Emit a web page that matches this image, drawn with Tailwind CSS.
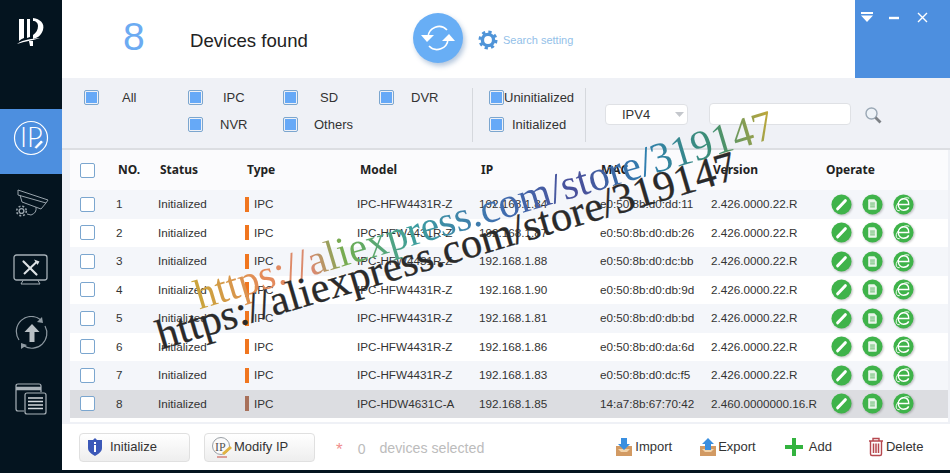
<!DOCTYPE html>
<html lang="en">
  <head>
    <meta charset="UTF-8" />
    <title>ConfigTool</title>
    <script src="https://cdn.jsdelivr.net/npm/@tailwindcss/browser@4"></script>
  </head>

  <body class="bg-[#04141f] font-['Liberation_Sans',Arial,sans-serif] overflow-hidden">
    <!-- shared icons -->
    <svg class="hidden">
      <symbol id="pen" viewBox="0 0 22 22">
        <circle cx="11" cy="11" r="10.5" fill="#3fb34a" />
        <path d="M7 15.5 L15 7" stroke="#fff" stroke-width="3.2" stroke-linecap="round" />
      </symbol>
      <symbol id="doc" viewBox="0 0 22 22">
        <circle cx="11" cy="11" r="10.5" fill="#3fb34a" />
        <path d="M6.5 6.5 Q6.5 5.5 7.5 5.5 H13 L15.5 8 V15.5 Q15.5 16.5 14.5 16.5 H7.5 Q6.5 16.5 6.5 15.5 Z" fill="#e9f5ea" />
        <path d="M8.5 9.5 H13.5 M8.5 11.5 H13.5 M8.5 13.5 H13.5" stroke="#5fb868" stroke-width="1" />
      </symbol>
      <symbol id="ie" viewBox="0 0 22 22">
        <circle cx="11" cy="11" r="10.5" fill="#3fb34a" />
        <path d="M5.5 11 H16.5 C16.5 6.5 13.5 5 11 5 C7.5 5 5.5 8 5.5 11 C5.5 15 8.5 17 11 17 C13.5 17 15.5 16 16.5 14" fill="none" stroke="#fff" stroke-width="1.4" />
        <path d="M17 4.5 C13 2.5 6 6 3.5 13 C2.8 15.5 4 18 7 17.5" fill="none" stroke="#fff" stroke-width="1" />
      </symbol>
    </svg>

    <div class="relative flex h-[470px] w-[950px] overflow-hidden">
      <!-- Sidebar -->
      <aside class="w-[62px] shrink-0 bg-[#04141f] flex flex-col">
        <div class="h-[109px] flex justify-center pt-[17px]">
          <svg width="30" height="30" viewBox="0 0 30 30">
            <path d="M3 2 H8 V21 Q5 22 3 24 Z" fill="#fff" />
            <path d="M11 2 H14 V20 L11 21 Z" fill="#fff" />
            <path d="M17 1 C24 2 29 6 27 13 C25 19 21 21 17 22 V18 C20 16 22 13 22 9 C22 6 20 4 17 4 Z" fill="#fff" />
            <path d="M1 27 C8 22 16 22 24 21 C16 24 9 24 1 27 Z" fill="#fff" />
            <path d="M13 24 H17 V29 H14 Z" fill="#fff" />
          </svg>
        </div>
        <div class="h-[65px] bg-[#4d8fdf] flex items-center justify-center pb-[7px] pr-[1px]">
          <svg width="36" height="36" viewBox="0 0 36 36">
            <circle cx="18" cy="18" r="16.5" fill="none" stroke="#fff" stroke-width="1.2" />
            <text x="7" y="27" font-size="27" font-family="Lato, sans-serif" font-weight="300" fill="#fff">IP</text>
            <path d="M21 27.5 L28 20 L30.5 22 L23.5 29 Z" fill="#fff" stroke="#4d8fdf" stroke-width="0.8" />
          </svg>
        </div>
        <div class="h-[66px] flex items-center justify-center pb-[6px] pl-[1px]">
          <svg width="34" height="31" viewBox="0 0 34 31" fill="none" stroke="#97a2aa" stroke-width="1">
            <path d="M3 1 L33 11 L31 14 L3 6 Z" />
            <path d="M5 6 L7 13 L26 20 L31 14" />
            <path d="M21 18 Q22 24 16 26 L12 25" />
            <circle cx="6.5" cy="22" r="2.4" stroke-width="1.4" />
            <circle cx="6.5" cy="22" r="4.8" stroke-width="1.6" stroke-dasharray="2 1.8" />
          </svg>
        </div>
        <div class="h-[60px] flex items-center justify-center">
          <svg width="36" height="32" viewBox="0 0 36 32" fill="none" stroke="#a5afb6">
            <rect x="1" y="1" width="33" height="25" rx="2.5" stroke-width="1.3" />
            <path d="M10 26.5 L8 30 H27 L25 26.5" stroke-width="1" />
            <path d="M10.5 7.5 L23.5 20.5" stroke="#dde1e4" stroke-width="2.2" stroke-linecap="round" />
            <path d="M23.5 8 L11 20" stroke="#dde1e4" stroke-width="2" />
            <path d="M21 5.5 L26.5 7.5 L24.5 11 Z" fill="#dde1e4" stroke="none" />
          </svg>
        </div>
        <div class="h-[66px] flex items-center justify-center pl-[1px]">
          <svg width="34" height="34" viewBox="0 0 34 34" fill="none">
            <path d="M4 24 A15 15 0 0 1 26 4" stroke="#8f9aa2" stroke-width="1.2" />
            <path d="M30 10 A15 15 0 0 1 9 30" stroke="#8f9aa2" stroke-width="1.2" />
            <path d="M27 1 L28 7 L22 6 Z" fill="#8f9aa2" />
            <path d="M6 33 L6 27 L12 29 Z" fill="#8f9aa2" />
            <path d="M17 8 L24.5 16 H19.5 V26 H14.5 V16 H9.5 Z" fill="#b9c0c5" />
          </svg>
        </div>
        <div class="h-[65px] flex items-center justify-center">
          <svg width="32" height="32" viewBox="0 0 32 32" fill="none" stroke="#aab3b9" stroke-width="1.2">
            <path d="M9 28 H3 Q1 28 1 26 V3 Q1 1 3 1 H24 Q26 1 26 3 V9" />
            <path d="M1 5.5 H26" stroke-width="3.5" />
            <rect x="10" y="10" width="21" height="21" rx="2" fill="#04141f" />
            <path d="M13 15 H28 M13 18.5 H28 M13 22 H28 M13 25.5 H28" stroke="#d3d8dc" stroke-width="1.5" />
          </svg>
        </div>
      </aside>

      <!-- Main -->
      <main class="flex-1 flex flex-col bg-white">
        <!-- Top bar -->
        <header class="h-[78px] flex shrink-0">
          <div class="flex-1 flex items-center">
            <span class="w-[128px] pl-[61px] -mt-[5px] text-[39px] leading-none text-[#6cabf2]">8</span>
            <span class="w-[223px] text-[18.6px] text-[#222] mt-[4px]">Devices found</span>
            <span class="size-[50px] -mt-[2px] rounded-full bg-[#68aef5] shadow-[2px_3px_5px_rgba(90,130,180,0.45)] flex items-center justify-center">
              <svg width="36" height="30" viewBox="0 0 36 30" fill="none">
                <path d="M8 14 A11 11 0 0 1 27 7" stroke="#fff" stroke-width="1.6" />
                <path d="M28 16 A11 11 0 0 1 9 23" stroke="#fff" stroke-width="1.6" />
                <path d="M1 12 L14 12 L7 19 Z" fill="#fff" />
                <path d="M22 18 L35 18 L29 11 Z" fill="#fff" />
              </svg>
            </span>
            <span class="ml-[15px] mt-[2px] flex items-center">
              <svg width="20" height="20" viewBox="0 0 20 20">
                <circle cx="10" cy="10" r="5.6" fill="none" stroke="#4f94d8" stroke-width="3.4" />
                <circle cx="10" cy="10" r="8" fill="none" stroke="#4f94d8" stroke-width="3" stroke-dasharray="3.2 3.1" />
              </svg>
              <span class="ml-[5px] text-[11px] text-[#93bfe9]">Search setting</span>
            </span>
          </div>
          <div class="w-[95px] bg-[#4d8fdf] flex items-start gap-[16px] pl-[6px] pt-[12px]">
            <svg width="12" height="11" viewBox="0 0 12 11"><path d="M0 0 H12 V2 H0 Z M0 3.5 H12 L6 10 Z" fill="#fff" /></svg>
            <svg width="11" height="11" viewBox="0 0 11 11"><path d="M0 6 H10" stroke="#fff" stroke-width="2.4" /></svg>
            <svg width="11" height="11" viewBox="0 0 11 11" class="ml-[1px]"><path d="M1 1 L10 10 M10 1 L1 10" stroke="#fff" stroke-width="1.4" /></svg>
          </div>
        </header>

        <!-- Filters + table -->
        <section class="flex-1 bg-[#eff1f6] flex flex-col">
          <div class="h-[72px] flex shrink-0 pt-[10px] border-b-2 border-[#dcdee2] text-[13px] text-[#333]">
            <div class="grid grid-cols-[104px_95px_96px_93px] grid-rows-[27px_27px] items-center pl-[22px] w-[410px] -mt-[4px] h-[54px]">
              <div class="flex items-center"><i class="size-[15px] border border-[#7ba6cf] p-px bg-[#66a9f7] bg-clip-content rounded-[2px]"></i><span class="ml-[23px]">All</span></div>
              <div class="flex items-center"><i class="size-[15px] border border-[#7ba6cf] p-px bg-[#66a9f7] bg-clip-content rounded-[2px]"></i><span class="ml-[20px]">IPC</span></div>
              <div class="flex items-center"><i class="size-[15px] border border-[#7ba6cf] p-px bg-[#66a9f7] bg-clip-content rounded-[2px]"></i><span class="ml-[22px]">SD</span></div>
              <div class="flex items-center"><i class="size-[15px] border border-[#7ba6cf] p-px bg-[#66a9f7] bg-clip-content rounded-[2px]"></i><span class="ml-[17px]">DVR</span></div>
              <div></div>
              <div class="flex items-center"><i class="size-[15px] border border-[#7ba6cf] p-px bg-[#66a9f7] bg-clip-content rounded-[2px]"></i><span class="ml-[17px]">NVR</span></div>
              <div class="flex items-center"><i class="size-[15px] border border-[#7ba6cf] p-px bg-[#66a9f7] bg-clip-content rounded-[2px]"></i><span class="ml-[16px]">Others</span></div>
            </div>
            <div class="h-[54px] w-[114px] border-x border-[#d5d8dd] pl-[16px]">
              <div class="grid grid-rows-[27px_27px] items-center -mt-[4px]">
                <div class="flex items-center"><i class="size-[15px] shrink-0 border border-[#7ba6cf] p-px bg-[#66a9f7] bg-clip-content rounded-[2px]"></i><span class="ml-[0px]">Uninitialized</span></div>
                <div class="flex items-center"><i class="size-[15px] shrink-0 border border-[#7ba6cf] p-px bg-[#66a9f7] bg-clip-content rounded-[2px]"></i><span class="ml-[8px]">Initialized</span></div>
              </div>
            </div>
            <div class="flex items-start pl-[19px] pt-[16px]">
              <div class="w-[83px] h-[21px] bg-white border border-[#dfe1e5] rounded-[4px] flex items-center justify-between pl-[16px] pr-[3px]">
                <span>IPV4</span>
                <svg width="9" height="6" viewBox="0 0 9 6"><path d="M0 0 H9 L4.5 5 Z" fill="#c4c7cc" /></svg>
              </div>
              <div class="ml-[21px] -mt-[1px] w-[142px] h-[22px] bg-white border border-[#dfe1e5] rounded-[4px]"></div>
              <svg width="17" height="17" viewBox="0 0 17 17" class="ml-[14px] mt-[3px]" fill="none">
                <circle cx="6.5" cy="6.5" r="5.5" stroke="#9aa8b5" stroke-width="1.4" fill="#eef3f8" />
                <path d="M10.5 10.5 L15.5 15.5" stroke="#7d8186" stroke-width="2.8" />
              </svg>
            </div>
          </div>

          <div class="ml-[8px] mr-[2px] bg-white flex-1 pb-[4px] mb-[2px]">
            <!-- Header -->
            <div class="h-[40px] grid grid-cols-[46px_42px_87px_112px_122px_121px_111px_120px_1fr] items-center text-[12px] font-['Noto_Sans',sans-serif] font-bold text-[#222] bg-[#fbfbfd]">
              <div class="pl-[10px]"><i class="block size-[15px] bg-white border border-[#7ba6cf] rounded-[2px]"></i></div>
              <div class="pl-[2px]">NO.</div>
              <div class="pl-[2px]">Status</div>
              <div class="pl-[2px]">Type</div>
              <div class="pl-[3px]">Model</div>
              <div class="pl-[2px]">IP</div>
              <div class="pl-[1px]">MAC</div>
              <div class="pl-[2px]">Version</div>
              <div class="-ml-[5px]">Operate</div>
            </div>

            <!-- Rows -->
            <div class="h-[28.5px] grid grid-cols-[46px_42px_87px_112px_122px_121px_111px_120px_1fr] items-center text-[11.7px] text-[#333] bg-[#f4f6fa]">
              <div class="pl-[10px]"><i class="block size-[15px] bg-white border border-[#7ba6cf] rounded-[2px]"></i></div>
              <div>1</div><div>Initialized</div>
              <div class="flex items-center"><i class="w-[4px] h-[15px] bg-[#f0761f]"></i><span class="ml-[5px]">IPC</span></div>
              <div>IPC-HFW4431R-Z</div><div>192.168.1.84</div><div>e0:50:8b:d0:dd:11</div><div>2.426.0000.22.R</div>
              <div class="flex gap-[10px]"><svg class="size-[21px] drop-shadow-[1px_1px_1px_rgba(0,0,0,0.25)]"><use href="#pen" /></svg><svg class="size-[21px] drop-shadow-[1px_1px_1px_rgba(0,0,0,0.25)]"><use href="#doc" /></svg><svg class="size-[21px] drop-shadow-[1px_1px_1px_rgba(0,0,0,0.25)]"><use href="#ie" /></svg></div>
            </div>
            <div class="h-[28.5px] grid grid-cols-[46px_42px_87px_112px_122px_121px_111px_120px_1fr] items-center text-[11.7px] text-[#333] bg-white">
              <div class="pl-[10px]"><i class="block size-[15px] bg-white border border-[#7ba6cf] rounded-[2px]"></i></div>
              <div>2</div><div>Initialized</div>
              <div class="flex items-center"><i class="w-[4px] h-[15px] bg-[#f0761f]"></i><span class="ml-[5px]">IPC</span></div>
              <div>IPC-HFW4431R-Z</div><div>192.168.1.87</div><div>e0:50:8b:d0:db:26</div><div>2.426.0000.22.R</div>
              <div class="flex gap-[10px]"><svg class="size-[21px] drop-shadow-[1px_1px_1px_rgba(0,0,0,0.25)]"><use href="#pen" /></svg><svg class="size-[21px] drop-shadow-[1px_1px_1px_rgba(0,0,0,0.25)]"><use href="#doc" /></svg><svg class="size-[21px] drop-shadow-[1px_1px_1px_rgba(0,0,0,0.25)]"><use href="#ie" /></svg></div>
            </div>
            <div class="h-[28.5px] grid grid-cols-[46px_42px_87px_112px_122px_121px_111px_120px_1fr] items-center text-[11.7px] text-[#333] bg-[#f4f6fa]">
              <div class="pl-[10px]"><i class="block size-[15px] bg-white border border-[#7ba6cf] rounded-[2px]"></i></div>
              <div>3</div><div>Initialized</div>
              <div class="flex items-center"><i class="w-[4px] h-[15px] bg-[#f0761f]"></i><span class="ml-[5px]">IPC</span></div>
              <div>IPC-HFW4431R-Z</div><div>192.168.1.88</div><div>e0:50:8b:d0:dc:bb</div><div>2.426.0000.22.R</div>
              <div class="flex gap-[10px]"><svg class="size-[21px] drop-shadow-[1px_1px_1px_rgba(0,0,0,0.25)]"><use href="#pen" /></svg><svg class="size-[21px] drop-shadow-[1px_1px_1px_rgba(0,0,0,0.25)]"><use href="#doc" /></svg><svg class="size-[21px] drop-shadow-[1px_1px_1px_rgba(0,0,0,0.25)]"><use href="#ie" /></svg></div>
            </div>
            <div class="h-[28.5px] grid grid-cols-[46px_42px_87px_112px_122px_121px_111px_120px_1fr] items-center text-[11.7px] text-[#333] bg-white">
              <div class="pl-[10px]"><i class="block size-[15px] bg-white border border-[#7ba6cf] rounded-[2px]"></i></div>
              <div>4</div><div>Initialized</div>
              <div class="flex items-center"><i class="w-[4px] h-[15px] bg-[#f0761f]"></i><span class="ml-[5px]">IPC</span></div>
              <div>IPC-HFW4431R-Z</div><div>192.168.1.90</div><div>e0:50:8b:d0:db:9d</div><div>2.426.0000.22.R</div>
              <div class="flex gap-[10px]"><svg class="size-[21px] drop-shadow-[1px_1px_1px_rgba(0,0,0,0.25)]"><use href="#pen" /></svg><svg class="size-[21px] drop-shadow-[1px_1px_1px_rgba(0,0,0,0.25)]"><use href="#doc" /></svg><svg class="size-[21px] drop-shadow-[1px_1px_1px_rgba(0,0,0,0.25)]"><use href="#ie" /></svg></div>
            </div>
            <div class="h-[28.5px] grid grid-cols-[46px_42px_87px_112px_122px_121px_111px_120px_1fr] items-center text-[11.7px] text-[#333] bg-[#f4f6fa]">
              <div class="pl-[10px]"><i class="block size-[15px] bg-white border border-[#7ba6cf] rounded-[2px]"></i></div>
              <div>5</div><div>Initialized</div>
              <div class="flex items-center"><i class="w-[4px] h-[15px] bg-[#f0761f]"></i><span class="ml-[5px]">IPC</span></div>
              <div>IPC-HFW4431R-Z</div><div>192.168.1.81</div><div>e0:50:8b:d0:db:bd</div><div>2.426.0000.22.R</div>
              <div class="flex gap-[10px]"><svg class="size-[21px] drop-shadow-[1px_1px_1px_rgba(0,0,0,0.25)]"><use href="#pen" /></svg><svg class="size-[21px] drop-shadow-[1px_1px_1px_rgba(0,0,0,0.25)]"><use href="#doc" /></svg><svg class="size-[21px] drop-shadow-[1px_1px_1px_rgba(0,0,0,0.25)]"><use href="#ie" /></svg></div>
            </div>
            <div class="h-[28.5px] grid grid-cols-[46px_42px_87px_112px_122px_121px_111px_120px_1fr] items-center text-[11.7px] text-[#333] bg-white">
              <div class="pl-[10px]"><i class="block size-[15px] bg-white border border-[#7ba6cf] rounded-[2px]"></i></div>
              <div>6</div><div>Initialized</div>
              <div class="flex items-center"><i class="w-[4px] h-[15px] bg-[#f0761f]"></i><span class="ml-[5px]">IPC</span></div>
              <div>IPC-HFW4431R-Z</div><div>192.168.1.86</div><div>e0:50:8b:d0:da:6d</div><div>2.426.0000.22.R</div>
              <div class="flex gap-[10px]"><svg class="size-[21px] drop-shadow-[1px_1px_1px_rgba(0,0,0,0.25)]"><use href="#pen" /></svg><svg class="size-[21px] drop-shadow-[1px_1px_1px_rgba(0,0,0,0.25)]"><use href="#doc" /></svg><svg class="size-[21px] drop-shadow-[1px_1px_1px_rgba(0,0,0,0.25)]"><use href="#ie" /></svg></div>
            </div>
            <div class="h-[28.5px] grid grid-cols-[46px_42px_87px_112px_122px_121px_111px_120px_1fr] items-center text-[11.7px] text-[#333] bg-[#f4f6fa]">
              <div class="pl-[10px]"><i class="block size-[15px] bg-white border border-[#7ba6cf] rounded-[2px]"></i></div>
              <div>7</div><div>Initialized</div>
              <div class="flex items-center"><i class="w-[4px] h-[15px] bg-[#f0761f]"></i><span class="ml-[5px]">IPC</span></div>
              <div>IPC-HFW4431R-Z</div><div>192.168.1.83</div><div>e0:50:8b:d0:dc:f5</div><div>2.426.0000.22.R</div>
              <div class="flex gap-[10px]"><svg class="size-[21px] drop-shadow-[1px_1px_1px_rgba(0,0,0,0.25)]"><use href="#pen" /></svg><svg class="size-[21px] drop-shadow-[1px_1px_1px_rgba(0,0,0,0.25)]"><use href="#doc" /></svg><svg class="size-[21px] drop-shadow-[1px_1px_1px_rgba(0,0,0,0.25)]"><use href="#ie" /></svg></div>
            </div>
            <div class="h-[28.5px] grid grid-cols-[46px_42px_87px_112px_122px_121px_111px_120px_1fr] items-center text-[11.7px] text-[#333] bg-[#dcdde1]">
              <div class="pl-[10px]"><i class="block size-[15px] bg-white border border-[#7ba6cf] rounded-[2px]"></i></div>
              <div>8</div><div>Initialized</div>
              <div class="flex items-center"><i class="w-[4px] h-[15px] bg-[#a8705a]"></i><span class="ml-[5px]">IPC</span></div>
              <div>IPC-HDW4631C-A</div><div>192.168.1.85</div><div>14:a7:8b:67:70:42</div><div class="whitespace-nowrap">2.460.0000000.16.R</div>
              <div class="flex gap-[10px]"><svg class="size-[21px] drop-shadow-[1px_1px_1px_rgba(0,0,0,0.25)]"><use href="#pen" /></svg><svg class="size-[21px] drop-shadow-[1px_1px_1px_rgba(0,0,0,0.25)]"><use href="#doc" /></svg><svg class="size-[21px] drop-shadow-[1px_1px_1px_rgba(0,0,0,0.25)]"><use href="#ie" /></svg></div>
            </div>
          </div>
        </section>

        <!-- Footer -->
        <footer class="h-[46px] shrink-0 flex items-center pl-[17px] text-[13px] text-[#333]">
          <button class="w-[111px] h-[29px] flex items-center pl-[7px] rounded-[4px] border border-[#e0e0e0] bg-gradient-to-b from-white to-[#eeeeee]">
            <svg width="16" height="18" viewBox="0 0 16 18"><path d="M8 0 L10 2 L15 2 V10 C15 14 11 16 8 18 C5 16 1 14 1 10 V2 L6 2 Z" fill="#3b58b8" /><path d="M7 7 H9 V14 H7 Z M7 4 H9 V6 H7 Z" fill="#fff" /></svg>
            <span class="ml-[7px]">Initialize</span>
          </button>
          <button class="ml-[14px] w-[111px] h-[29px] flex items-center pl-[7px] rounded-[4px] border border-[#e0e0e0] bg-gradient-to-b from-white to-[#eeeeee]">
            <svg width="20" height="22" viewBox="0 0 20 22" fill="none">
              <circle cx="9" cy="10" r="8.5" stroke="#9aa0a6" fill="#fafafa" />
              <text x="3" y="15" font-size="12" font-family="Liberation Serif, serif" fill="#555">IP</text>
              <path d="M10 17 L18 10 L20 12 L12 19 Z" fill="#e2b33f" />
              <path d="M5 21 H15" stroke="#c64a3f" />
            </svg>
            <span class="ml-[2px]">Modify IP</span>
          </button>
          <span class="ml-[21px] mt-[5px] text-[17px] text-[#f08e8e]">*</span>
          <span class="ml-[15px] mt-[4px] text-[14px] text-[#bcbcbc]">0</span>
          <span class="ml-[14px] mt-[4px] text-[14.2px] text-[#bcbcbc]">devices selected</span>

          <svg width="16" height="18" viewBox="0 0 16 18" class="ml-[132px]"><path d="M0 8 H16 V18 H0 Z" fill="#d29a63" /><path d="M2 11 H14 L11 14 H5 Z" fill="#f2d3a9" /><path d="M5 0 H11 V6 H14 L8 12 L2 6 H5 Z" fill="#3a8fe0" /></svg>
          <span class="ml-[3px]">Import</span>
          <svg width="16" height="18" viewBox="0 0 16 18" class="ml-[28px]"><path d="M0 8 H16 V18 H0 Z" fill="#d29a63" /><path d="M2 11 H14 L11 14 H5 Z" fill="#f2d3a9" /><path d="M8 0 L14 6 H11 V12 H5 V6 H2 Z" fill="#3a8fe0" /></svg>
          <span class="ml-[2px]">Export</span>
          <svg width="18" height="18" viewBox="0 0 18 18" class="ml-[29px]"><path d="M7 0 H11 V7 H18 V11 H11 V18 H7 V11 H0 V7 H7 Z" fill="#33b33f" /></svg>
          <span class="ml-[6px]">Add</span>
          <svg width="16" height="20" viewBox="0 0 16 20" fill="none" stroke="#b6484f" class="ml-[36px]">
            <path d="M1 4 H15 M5 4 V1.5 H11 V4" stroke-width="1.4" />
            <path d="M2.5 4 V17 Q2.5 18.5 4 18.5 H12 Q13.5 18.5 13.5 17 V4" stroke-width="1.4" />
            <path d="M5.5 6.5 V16 M8 6.5 V16 M10.5 6.5 V16" stroke-width="1.5" />
          </svg>
          <span class="ml-[2px]">Delete</span>
        </footer>
      </main>

      <!-- Watermark lying over the window -->
      <div class="absolute left-[202px] top-[271px] origin-[0_100%] -rotate-[16.6deg] whitespace-nowrap text-[42.3px] leading-[48px] font-['Liberation_Serif',serif] text-transparent bg-clip-text bg-[linear-gradient(90deg,#c9a53a_0%,#e58a5a_12%,#d98a70_20%,#6fae4f_26%,#3d9ea0_38%,#3f6fb0_52%,#4a4f9a_66%,#2f7fb0_78%,#3d8f70_90%,#c2a83a_100%)]">https://aliexpress.com/store/319147</div>
      <div class="absolute left-[164px] top-[311px] origin-[0_100%] -rotate-[16.5deg] whitespace-nowrap text-[42.3px] leading-[48px] font-['Liberation_Serif',serif] text-[#2a2a2a] [-webkit-text-stroke:0.3px_#2a2a2a]">https://aliexpress.com/store/319147</div>
    </div>
  </body>
</html>
